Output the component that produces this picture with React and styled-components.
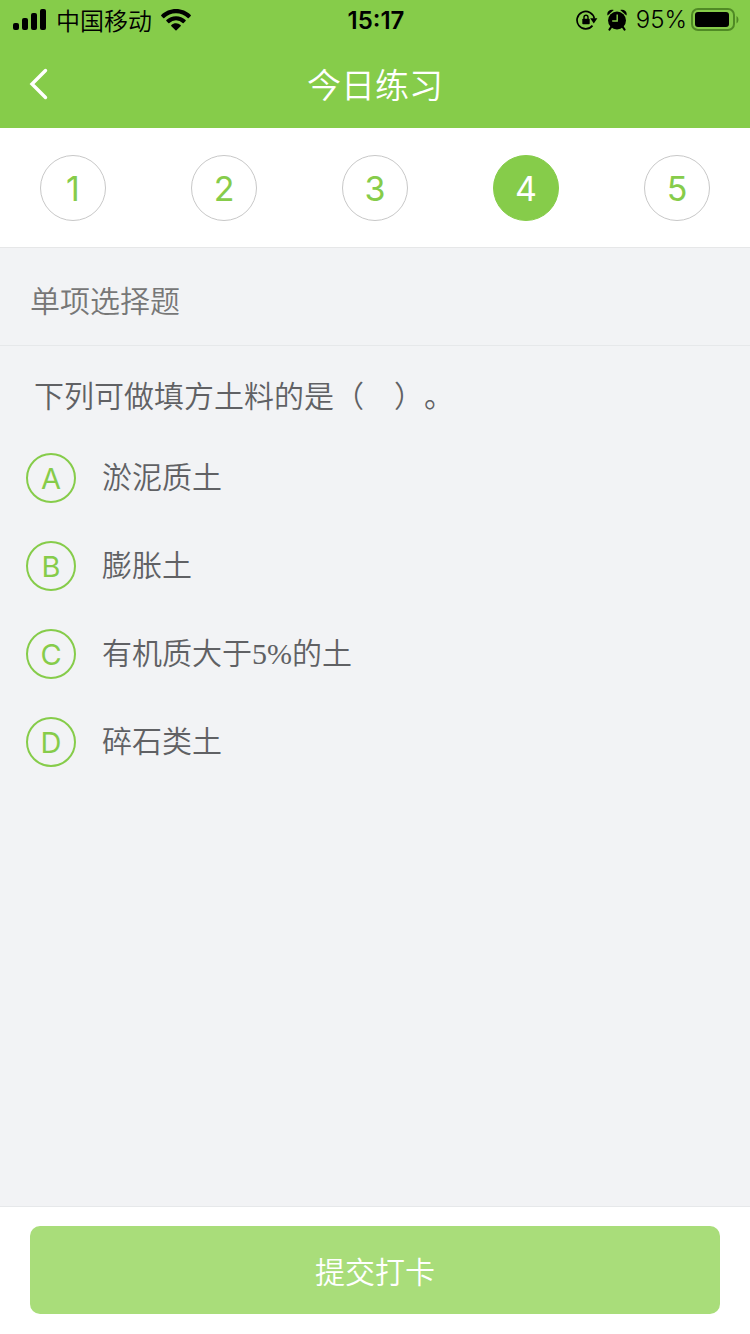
import React, { useState } from "react";

import styled, { createGlobalStyle } from "styled-components";

const questions = [1, 2, 3, 4, 5];

const options = [
  { key: "A", text: "淤泥质土" },
  { key: "B", text: "膨胀土" },
  { key: "C", text: "有机质大于5%的土" },
  { key: "D", text: "碎石类土" },
];

const SignalIcon = () => (
  <svg width="34" height="22" viewBox="0 0 34 22" aria-hidden="true">
    <rect x="0" y="14" width="6" height="7" rx="2" />
    <rect x="9" y="9" width="6" height="12" rx="2" />
    <rect x="18" y="4" width="6" height="17" rx="2" />
    <rect x="27" y="0" width="6" height="21" rx="2" />
  </svg>
);

const WifiIcon = () => (
  <svg width="30" height="22" viewBox="0 0 30 22" aria-hidden="true">
    <path d="M15 0C9.300 0 4 2.200 .3 5.900a.8.800 0 0 0 0 1.100l1.900 1.900c.3.300.8.300 1.100 0A16.700 16.700 0 0 1 15 4.200c4.500 0 8.600 1.800 11.700 4.700.3.300.8.300 1.100 0L29.700 7a.8.800 0 0 0 0-1.100C26 2.200 20.700 0 15 0Z" />
    <path d="M15 7.200c-3.700 0-7.100 1.400-9.600 3.800a.8.800 0 0 0 0 1.100l1.900 1.900c.3.300.8.300 1.100 0a9.500 9.500 0 0 1 13.200 0c.3.300.8.300 1.100 0l1.900-1.900a.8.800 0 0 0 0-1.100A13.800 13.800 0 0 0 15 7.200Z" />
    <path d="M15 14.300c-1.800 0-3.400.6-4.600 1.700a.8.800 0 0 0 0 1.200l4.100 4.100c.3.300.7.300 1 0l4.100-4.100a.8.800 0 0 0 0-1.200 6.900 6.900 0 0 0-4.600-1.700Z" />
  </svg>
);

const RotationLockIcon = () => (
  <svg width="22" height="20" viewBox="0 0 22 20" aria-hidden="true">
    <path
      d="M16.500 15.600A8.700 8.700 0 1 1 18.300 8.600"
      fill="none"
      stroke="#000"
      strokeWidth="1.700"
    />
    <path d="M14.200 8.300h7.200L17.800 13.400Z" />
    <rect x="6.300" y="8.700" width="7.400" height="5.600" rx=".8" />
    <path
      d="M8 9V7.300a2 2 0 0 1 4 0V9"
      fill="none"
      stroke="#000"
      strokeWidth="1.400"
    />
  </svg>
);

const AlarmIcon = () => (
  <svg width="20" height="22" viewBox="0 0 20 22" aria-hidden="true">
    <circle cx="10" cy="11.500" r="9" />
    <path d="M.6 6.400C-.8 3 2.800-.4 6.800 1ZM19.400 6.400C20.800 3 17.200-.4 13.200 1Z" />
    <path
      d="M4.500 17.500 2.500 20.500M15.500 17.500l2 3"
      fill="none"
      stroke="#000"
      strokeWidth="2.200"
      strokeLinecap="round"
    />
    <path
      d="M10.200 5.500v6.500H5.200"
      fill="none"
      stroke="#86cc4a"
      strokeWidth="1.400"
    />
  </svg>
);

const BatteryIcon = () => (
  <svg width="48" height="24" viewBox="0 0 48 24" aria-hidden="true">
    <rect
      x="1"
      y="1"
      width="42"
      height="21"
      rx="6"
      fill="none"
      stroke="#508a25"
      strokeWidth="2"
    />
    <rect x="4" y="4" width="34" height="15" rx="3" />
    <path d="M45.500 8c2.600 1.500 2.600 6 0 7.500Z" fill="#508a25" />
  </svg>
);

export default function App() {
  const [current, setCurrent] = useState(4);

  const [answer, setAnswer] = useState("");

  return (
    <>
      <GlobalStyle />
      <Page>
        <StatusBar>
          <StatusLeft>
            <SignalIcon />
            <Carrier>中国移动</Carrier>
            <WifiIcon />
          </StatusLeft>
          <Time>15:17</Time>
          <StatusRight>
            <RotationLockIcon />
            <AlarmIcon />
            <Battery>
              <span>95%</span>
              <BatteryIcon />
            </Battery>
          </StatusRight>
        </StatusBar>

        <Header>
          <BackButton type="button" aria-label="返回">
            <svg width="20" height="32" viewBox="0 0 20 32">
              <path
                d="M17.500 2.500 4 16l13.500 13.500"
                fill="none"
                stroke="#fff"
                strokeWidth="3.400"
                strokeLinecap="round"
              />
            </svg>
          </BackButton>
          <Title>今日练习</Title>
        </Header>

        <QuestionNav>
          {questions.map((number) => (
            <NumberButton
              key={number}
              type="button"
              $active={number === current}
              onClick={() => setCurrent(number)}
            >
              {number}
            </NumberButton>
          ))}
        </QuestionNav>

        <Main>
          <QuestionType>单项选择题</QuestionType>
          <Question id="question">下列可做填方土料的是（　）。</Question>
          <OptionList role="radiogroup" aria-labelledby="question">
            {options.map((option) => (
              <Option key={option.key} htmlFor={`option${option.key}`}>
                <Marker>
                  <Radio
                    id={`option${option.key}`}
                    type="radio"
                    name="answer"
                    value={option.key}
                    checked={answer === option.key}
                    onChange={() => setAnswer(option.key)}
                  />
                  <Letter>{option.key}</Letter>
                </Marker>
                <OptionText>{option.text}</OptionText>
              </Option>
            ))}
          </OptionList>
        </Main>

        <Footer>
          <SubmitButton type="button">提交打卡</SubmitButton>
        </Footer>
      </Page>
    </>
  );
}

const GlobalStyle = createGlobalStyle`
  * {
    box-sizing: border-box;
  }
  body {
    margin: 0;
    background: #f2f3f5;
    text-spacing-trim: space-all;
  }
  body,
  button {
    font-family: Inter, "Noto Sans CJK SC", sans-serif;
    font-weight: 350;
  }
  button {
    cursor: pointer;
  }
  svg {
    display: block;
    flex-shrink: 0;
  }
`;

const Page = styled.div`
  display: flex;
  flex-direction: column;
  min-height: 100vh;
`;

const StatusBar = styled.div`
  display: grid;
  grid-template-columns: 1fr auto 1fr;
  align-items: center;
  height: 40px;
  padding: 0 11px 0 13px;
  background: #86cc4a;
  color: #000;
  font-size: 24px;
  line-height: 36px;
`;

const StatusLeft = styled.div`
  display: flex;
  align-items: center;
  gap: 9px;
`;

const StatusRight = styled(StatusLeft)`
  justify-content: flex-end;
`;

const Carrier = styled.span`
  padding-top: 3px;
`;

const Time = styled.span`
  padding-top: 1px;
  font-weight: 600;
`;

const Battery = styled.div`
  display: flex;
  align-items: center;
  gap: 4px;
`;

const Header = styled.header`
  display: grid;
  grid-template-columns: 80px 1fr 80px;
  align-items: center;
  height: 88px;
  background: #86cc4a;
`;

const BackButton = styled.button`
  display: flex;
  align-items: center;
  height: 88px;
  padding: 0 28px;
  border: none;
  background: none;
`;

const Title = styled.h1`
  margin: 0;
  padding-top: 4px;
  color: #fff;
  font-size: 34px;
  line-height: 84px;
  font-weight: 350;
  text-align: center;
`;

const QuestionNav = styled.nav`
  display: flex;
  align-items: center;
  justify-content: space-between;
  height: 120px;
  padding: 0 40px;
  border-bottom: 1px solid #e6e7e8;
  background: #fff;
`;

const NumberButton = styled.button`
  width: 66px;
  height: 66px;
  padding: 1px 0 0;
  border: 1px solid ${(props) => (props.$active ? "#86cc4a" : "#c8c8c8")};
  border-radius: 50%;
  background: ${(props) => (props.$active ? "#86cc4a" : "#fff")};
  color: ${(props) => (props.$active ? "#fff" : "#86cc4a")};
  font-size: 34px;
  font-weight: 400;
`;

const Main = styled.main`
  flex: 1;
`;

const QuestionType = styled.h2`
  margin: 0;
  padding: 28px 30px 19px;
  border-bottom: 1px solid #e6e8ea;
  color: #777;
  font-size: 30px;
  line-height: 50px;
  font-weight: 350;
`;

const Question = styled.p`
  margin: 0;
  padding: 26px 34px 0;
  color: #606164;
  font-size: 30px;
  line-height: 50px;
  font-family: "Liberation Serif", "Noto Sans CJK SC", serif;
`;

const OptionList = styled.div`
  display: flex;
  flex-direction: column;
  gap: 38px;
  padding: 31px 26px;
`;

const Option = styled.label`
  display: flex;
  align-items: center;
  gap: 26px;
  cursor: pointer;
`;

const Marker = styled.span`
  display: grid;
  place-items: center;
  flex-shrink: 0;
  width: 50px;
  height: 50px;
  > * {
    grid-area: 1 / 1;
  }
`;

const Radio = styled.input`
  appearance: none;
  width: 50px;
  height: 50px;
  margin: 0;
  border: 2px solid #86cc4a;
  border-radius: 50%;
  &:checked {
    background: #86cc4a;
  }
  &:checked + span {
    color: #fff;
  }
`;

const Letter = styled.span`
  padding-top: 2px;
  color: #86cc4a;
  font-size: 29px;
  font-weight: 400;
  line-height: 48px;
`;

const OptionText = styled.span`
  color: #606164;
  font-size: 30px;
  line-height: 50px;
  font-family: "Liberation Serif", "Noto Sans CJK SC", serif;
`;

const Footer = styled.footer`
  padding: 19px 30px 20px;
  border-top: 1px solid #e6e8ea;
  background: #fff;
`;

const SubmitButton = styled.button`
  display: block;
  width: 100%;
  height: 88px;
  border: none;
  border-radius: 10px;
  background: #a9dd7a;
  color: #fff;
  font-size: 30px;
`;
